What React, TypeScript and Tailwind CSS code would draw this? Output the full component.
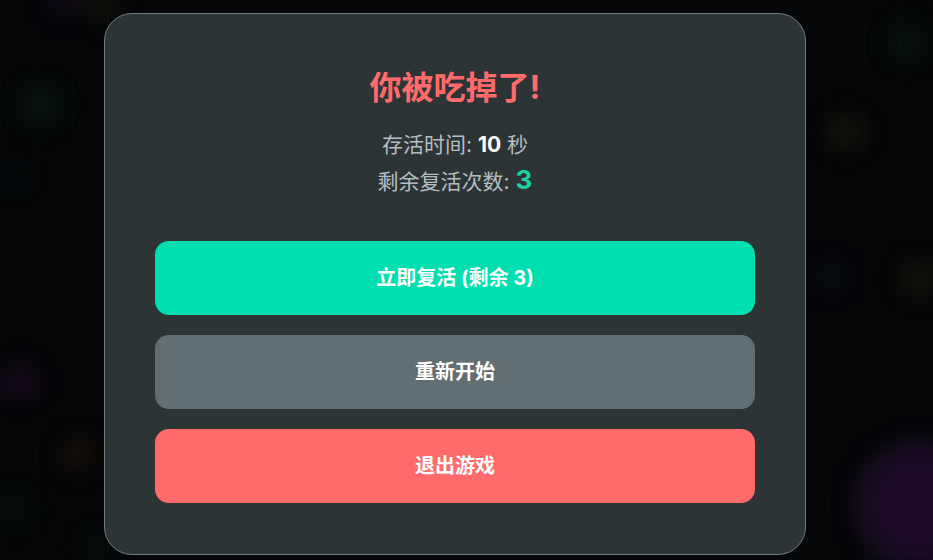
import React from "react";

// faint blurred food dots on the game field behind the modal
const dots = [
  { x: 40, y: 105, r: 20, c: "rgba(20,120,70,0.13)" },
  { x: 100, y: 4, r: 18, c: "rgba(120,120,20,0.1)" },
  { x: 64, y: 2, r: 16, c: "rgba(110,30,140,0.12)" },
  { x: 14, y: 178, r: 12, c: "rgba(20,120,90,0.08)" },
  { x: 20, y: 382, r: 18, c: "rgba(130,20,130,0.15)" },
  { x: 78, y: 454, r: 18, c: "rgba(130,70,10,0.12)" },
  { x: 14, y: 510, r: 16, c: "rgba(30,110,40,0.1)" },
  { x: 96, y: 548, r: 14, c: "rgba(30,110,40,0.1)" },
  { x: 906, y: 42, r: 18, c: "rgba(20,110,40,0.14)" },
  { x: 845, y: 132, r: 18, c: "rgba(130,110,20,0.12)" },
  { x: 830, y: 276, r: 14, c: "rgba(30,60,110,0.13)" },
  { x: 918, y: 278, r: 18, c: "rgba(130,110,20,0.12)" },
  { x: 918, y: 505, r: 62, c: "rgba(100,30,130,0.25)" },
];

function Backdrop() {
  return (
    <div className="absolute inset-0 overflow-hidden bg-[#050608] bg-[linear-gradient(90deg,rgba(255,255,255,0.012)_1px,transparent_1px)] bg-[size:36px_36px]">
      {dots.map((d, i) => (
        <div
          key={i}
          className="absolute rounded-full blur-md"
          style={{
            left: d.x - d.r,
            top: d.y - d.r,
            width: d.r * 2,
            height: d.r * 2,
            background: d.c,
          }}
        />
      ))}
    </div>
  );
}

export default function App() {
  return (
    <div className="relative h-[560px] w-[933px] overflow-hidden font-['Inter','Noto_Sans_CJK_SC',sans-serif]">
      <Backdrop />
      <div className="relative flex pl-[104px] pt-[13px]">
        <div className="flex h-[542px] w-[702px] flex-col rounded-[28px] border-[1.5px] border-[#737b7f] bg-[#2d3436] px-[50px] pt-[55px] text-center">
          <h1 className="text-[32px] font-bold leading-[38px] text-[#ff6b6b]">你被吃掉了!</h1>
          <p className="mt-[22px] text-[21px] leading-[32px] text-[#b2bec3]">
            存活时间: <span className="font-bold text-white">10</span> 秒
          </p>
          <p className="mt-[5px] text-[21px] leading-[32px] text-[#b2bec3]">
            剩余复活次数: <span className="text-[26px] font-bold leading-none text-[#1dd1a1]">3</span>
          </p>
          <div className="mt-[43px] flex flex-col gap-5">
            <button className="h-[74px] rounded-[14px] bg-[#00dfb0] text-[20px] font-bold text-white">
              立即复活 (剩余 3)
            </button>
            <button className="h-[74px] rounded-[14px] bg-[#636e72] text-[20px] font-bold text-white">
              重新开始
            </button>
            <button className="h-[74px] rounded-[14px] bg-[#ff6b6b] text-[20px] font-bold text-white">
              退出游戏
            </button>
          </div>
        </div>
      </div>
    </div>
  );
}
